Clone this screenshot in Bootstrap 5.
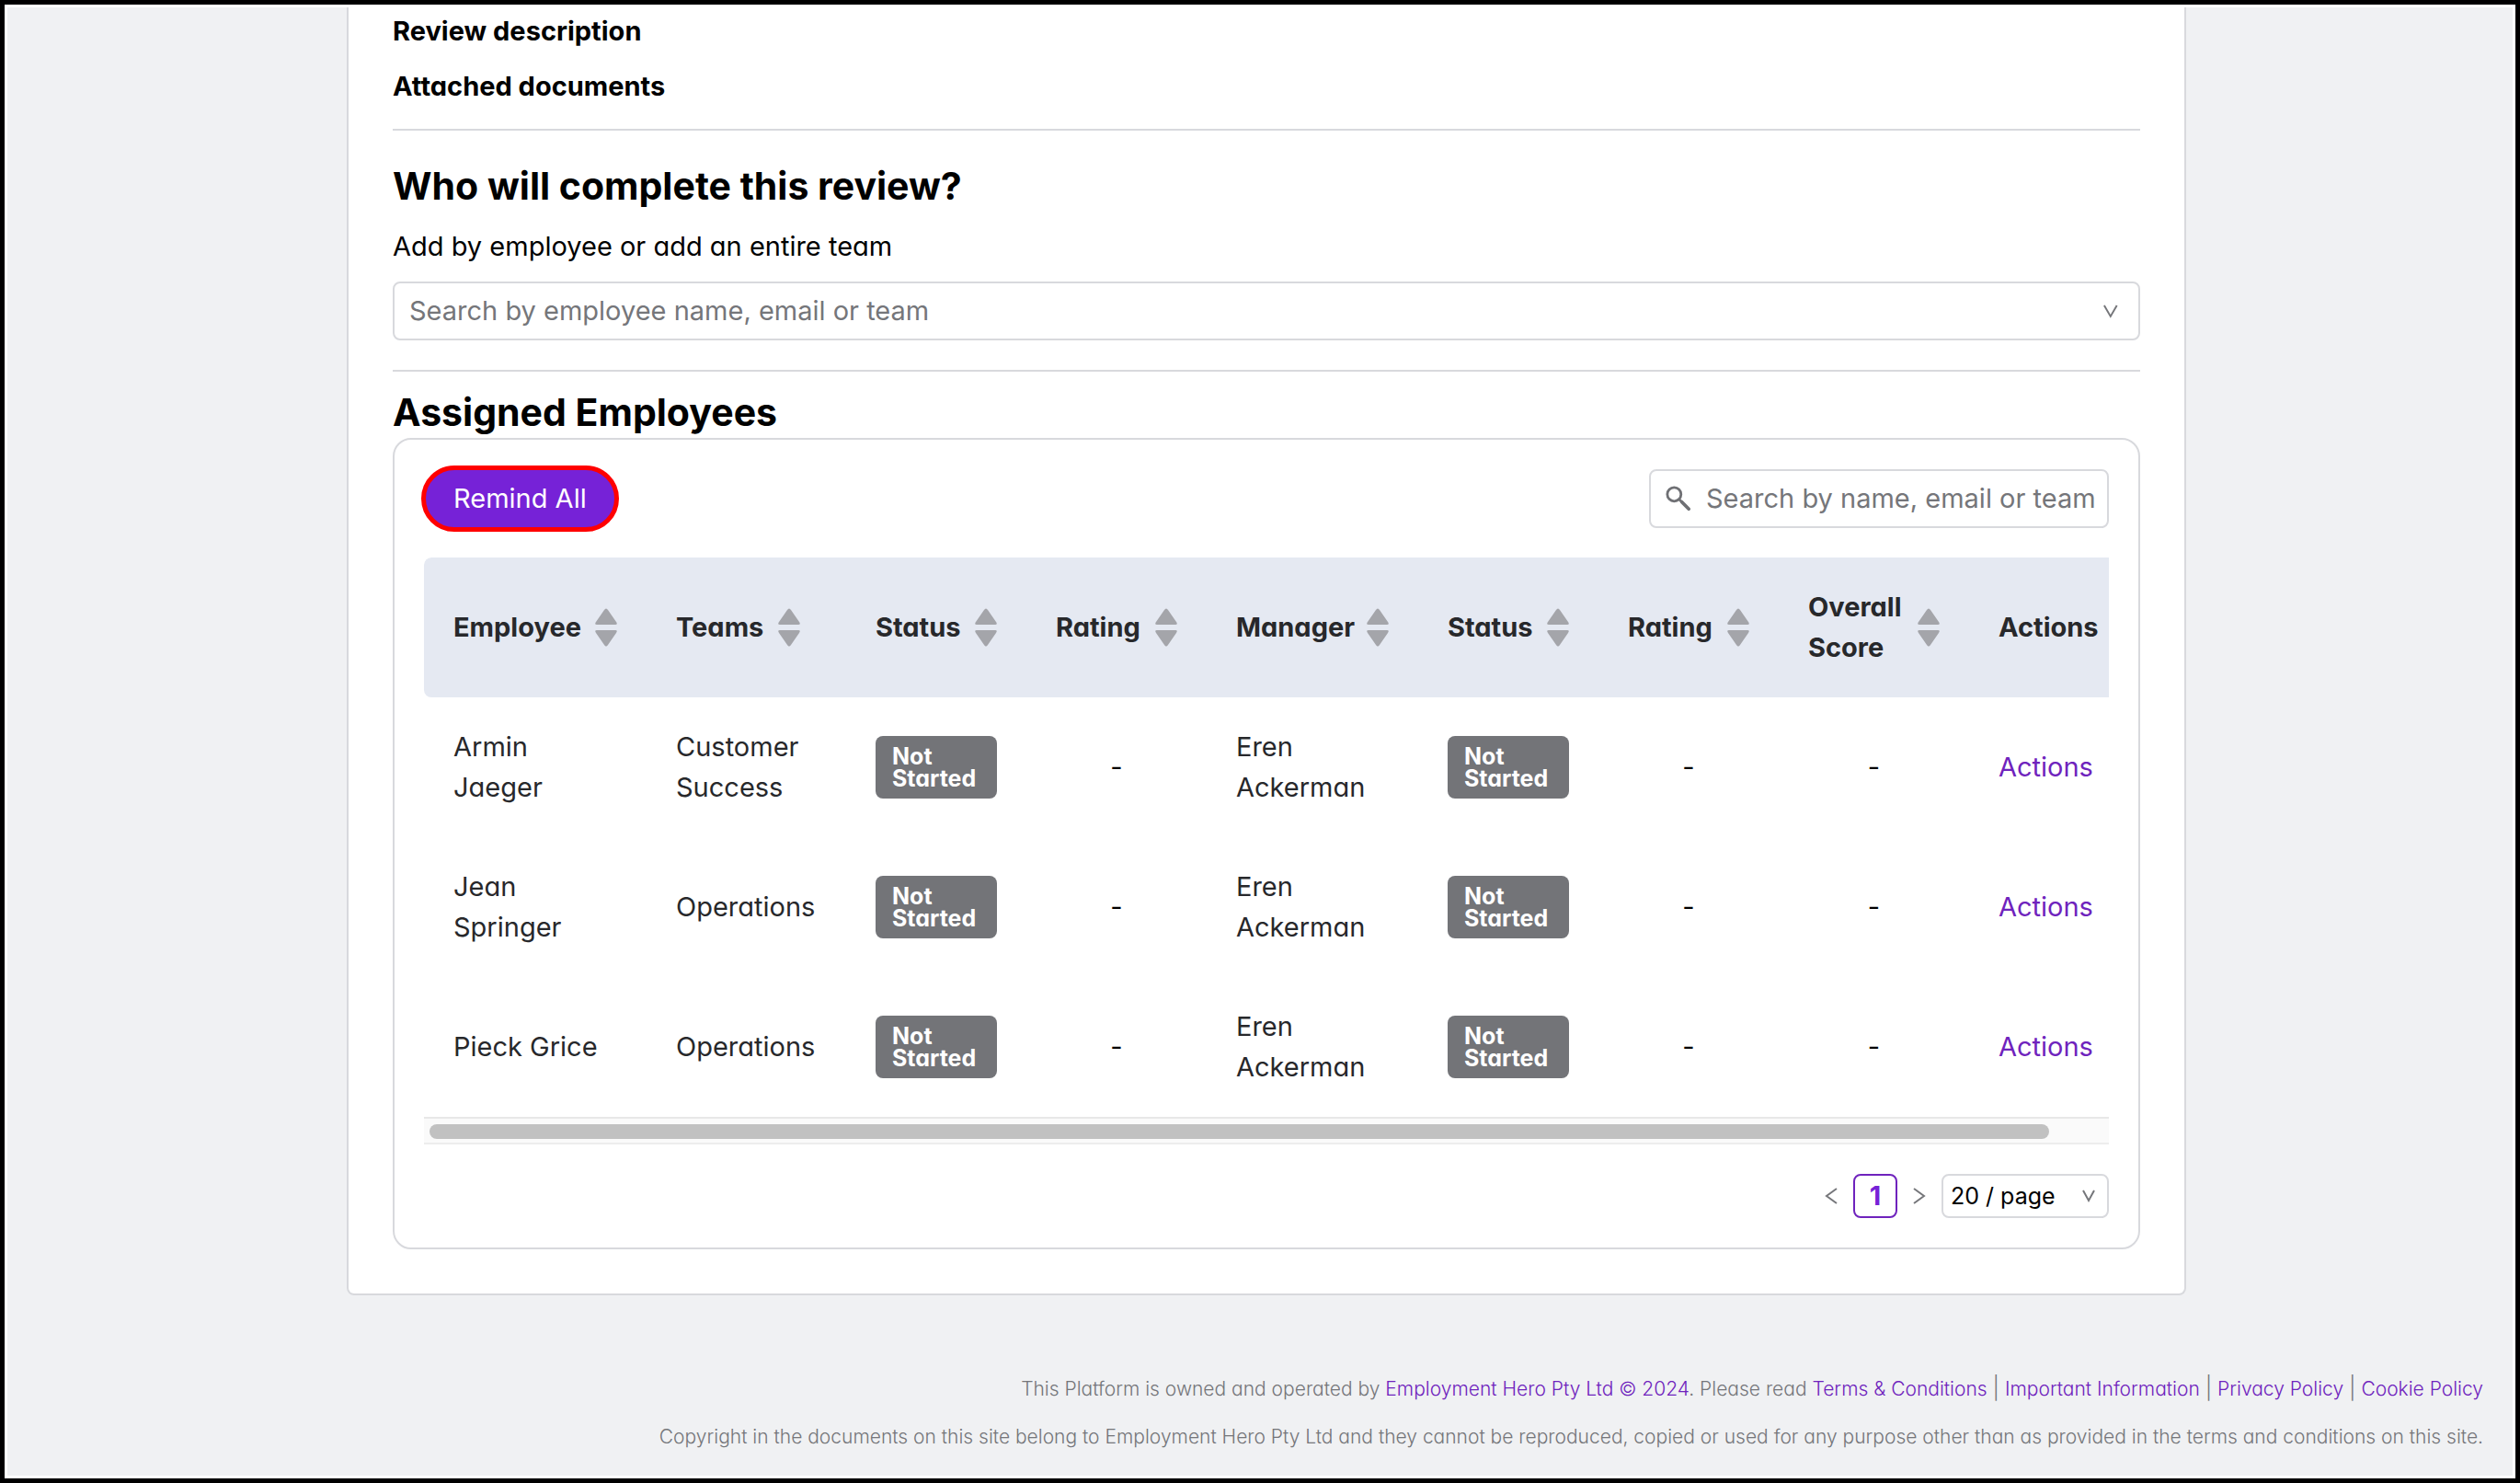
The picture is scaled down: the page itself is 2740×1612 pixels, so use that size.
<!DOCTYPE html>
<html lang="en">
<head>
<meta charset="utf-8">
<meta name="viewport" content="width=device-width, initial-scale=1">
<title>Performance review</title>
<link href="https://cdn.jsdelivr.net/npm/bootstrap@5.3.0/dist/css/bootstrap.min.css" rel="stylesheet">
<style>
  :root { --line: #d8d9dd; --brand: #6f23bd; --muted: #75767a; --ink: #27282b; }
  body { font-family: Inter, "Noto Sans", sans-serif; font-feature-settings: "cv11"; font-size: 29px; line-height: 44px; color: #000; background: #fff; }
  .page-frame { min-height: 100vh; border: 5px solid #000; padding: 3px; }
  .page-bg { background: #f0f1f3; }
  .page-main { padding-left: 14px; }
  .review-card { width: 100%; max-width: 2000px; background: #fff; border: 2px solid var(--line); border-top: 0; border-radius: 0 0 8px 8px; padding: 4px 48px 48px; }
  .field-title { font-size: 29px; line-height: 44px; font-weight: 700; margin: 0 0 16px; }
  .rule { height: 2px; background: var(--line); border: 0; opacity: 1; margin: 0; }
  .list-rule { margin: 32px 0 16px; }
  .section-title { font-size: 41px; line-height: 56px; font-weight: 700; margin: 0; }
  .field-box { height: 64px; border: 2px solid var(--line); border-radius: 8px; background: #fff; padding: 0 16px; }
  .field-box input { border: 0; padding: 0; font-size: 29px; line-height: 44px; background: transparent; min-width: 0; box-shadow: none; }
  .field-box input::placeholder { color: var(--muted); opacity: 1; }
  .search-box { width: 500px; padding-right: 8px; }
  .list-panel { border: 2px solid var(--line); border-radius: 20px; padding: 32px; }
  .btn-remind { --bs-btn-color: #fff; --bs-btn-bg: #7622d7; --bs-btn-hover-color: #fff; --bs-btn-hover-bg: #6a1cc4; font-size: 29px; line-height: 44px; padding: 9px 30px; border: 5px solid #f00; border-radius: 36px; margin: -5px 0 -4px -3px; }
  .table-clip { overflow: hidden; border-radius: 8px 0 0 0; }
  .people-table { table-layout: fixed; width: 1892px; margin: 0; --bs-table-bg: transparent; }
  .people-table > :not(caption) > * > * { padding: 32px; border: 0; height: 152px; vertical-align: middle; color: var(--ink); }
  .people-table > thead > tr > th { background: #e5e9f2; font-weight: 700; }
  .people-table > thead > tr > th:first-child { border-radius: 8px 0 0 8px; }
  .people-table > tbody > tr > td.num-cell { text-align: center; color: #000; }
  .sort-icon { width: 24px; height: 42px; flex: none; fill: #a4a5aa; }
  .col-name { width: 242px; } .col-team { width: 217px; } .col-short { width: 196px; } .col-manager { width: 230px; } .col-score { width: 207px; } .col-actions { width: 212px; }
  .status-tag { display: block; width: 132px; background: #737478; color: #fff; font-size: 25px; line-height: 24px; font-weight: 700; text-align: left; white-space: normal; padding: 10px 16px 10px 18px; border-radius: 8px; }
  .brand-link { color: var(--brand); text-decoration: none; }
  .scroll-track { height: 30px; background: #fafafa; border-top: 2px solid #e8e8e8; border-bottom: 2px solid #ededed; padding: 6px; }
  .scroll-thumb { width: calc(97% - 4px); height: 16px; border-radius: 8px; background: #c1c1c1; }
  .pager { gap: 16px; margin-top: 32px; }
  .pager-arrow { border: 0; background: none; padding: 0; width: 16px; display: flex; justify-content: center; }
  .pager-current { width: 48px; height: 48px; padding: 0; border: 2px solid var(--brand); border-radius: 8px; background: #fff; color: #7622d7; font-size: 29px; line-height: 44px; font-weight: 700; }
  .pager-size { width: 182px; height: 48px; border: 2px solid var(--line); border-radius: 8px; font-size: 25px; line-height: 44px; padding: 0 40px 0 8px; color: #000; background-color: #fff; background-position: right 12px center; background-size: 16px 16px; --bs-form-select-bg-img: url("data:image/svg+xml,%3Csvg xmlns='http://www.w3.org/2000/svg' viewBox='0 0 16 16' fill='none' stroke='%2375767a' stroke-width='2'%3E%3Cpath d='M2 2l6 11 6-11'/%3E%3C/svg%3E"); background-image: var(--bs-form-select-bg-img); }
  .page-foot { font-size: 21px; font-weight: 300; line-height: 36px; color: var(--muted); padding: 83px 32px 24px; }
  .page-foot p { margin: 0 0 16px; }
  .foot-sep { font-size: 24px; }
</style>
</head>
<body>
<div class="page-frame d-flex">
 <div class="page-bg d-flex flex-column flex-grow-1">
  <main class="page-main d-flex justify-content-center">
    <section class="review-card">
      <h3 class="field-title">Review description</h3>
      <h3 class="field-title">Attached documents</h3>
      <hr class="rule mt-4">
      <h2 class="section-title pt-2 mt-4">Who will complete this review?</h2>
      <label for="addPeople" class="d-block mt-3 mb-3">Add by employee or add an entire team</label>
      <div class="field-box d-flex align-items-center">
        <input id="addPeople" class="form-control flex-grow-1" type="text" role="combobox" aria-expanded="false" placeholder="Search by employee name, email or team">
        <svg width="28" height="20" viewBox="0 0 28 20" fill="none" stroke="#75767a" stroke-width="2" aria-hidden="true"><path d="M7 4l7 12 7-12"/></svg>
      </div>
      <hr class="rule list-rule">
      <h2 class="section-title">Assigned Employees</h2>
      <div class="list-panel">
        <div class="d-flex justify-content-between align-items-center mb-4 pb-2">
          <button type="button" class="btn btn-remind">Remind All</button>
          <div class="field-box search-box d-flex align-items-center">
            <svg class="flex-shrink-0" width="28" height="28" viewBox="0 0 30 30" fill="none" stroke="#6f7074" aria-hidden="true"><circle cx="10" cy="10" r="8" stroke-width="3"/><path d="M16 16l3 3" stroke-width="3"/><path d="M19 19l8 8" stroke-width="4" stroke-linecap="round"/></svg>
            <input id="findPeople" class="form-control flex-grow-1 ms-3" type="text" aria-label="Search by name, email or team" placeholder="Search by name, email or team">
          </div>
        </div>
        <div class="table-clip">
          <table class="table people-table">
            <colgroup><col class="col-name"><col class="col-team"><col class="col-short"><col class="col-short"><col class="col-manager"><col class="col-short"><col class="col-short"><col class="col-score"><col class="col-actions"></colgroup>
            <thead>
              <tr>
                <th scope="col"><div class="d-flex align-items-center justify-content-between">Employee <svg class="sort-icon"><use href="#sort"/></svg></div></th>
                <th scope="col"><div class="d-flex align-items-center gap-3">Teams <svg class="sort-icon"><use href="#sort"/></svg></div></th>
                <th scope="col"><div class="d-flex align-items-center justify-content-between">Status <svg class="sort-icon"><use href="#sort"/></svg></div></th>
                <th scope="col"><div class="d-flex align-items-center justify-content-between">Rating <svg class="sort-icon"><use href="#sort"/></svg></div></th>
                <th scope="col"><div class="d-flex align-items-center justify-content-between">Manager <svg class="sort-icon"><use href="#sort"/></svg></div></th>
                <th scope="col"><div class="d-flex align-items-center justify-content-between">Status <svg class="sort-icon"><use href="#sort"/></svg></div></th>
                <th scope="col"><div class="d-flex align-items-center justify-content-between">Rating <svg class="sort-icon"><use href="#sort"/></svg></div></th>
                <th scope="col"><div class="d-flex align-items-center justify-content-between">Overall Score <svg class="sort-icon"><use href="#sort"/></svg></div></th>
                <th scope="col">Actions</th>
              </tr>
            </thead>
            <tbody>
              <tr><td>Armin Jaeger</td><td>Customer Success</td><td><span class="status-tag">Not Started</span></td><td class="num-cell">-</td><td>Eren Ackerman</td><td><span class="status-tag">Not Started</span></td><td class="num-cell">-</td><td class="num-cell">-</td><td><a class="brand-link" href="#">Actions</a></td></tr>
              <tr><td>Jean Springer</td><td>Operations</td><td><span class="status-tag">Not Started</span></td><td class="num-cell">-</td><td>Eren Ackerman</td><td><span class="status-tag">Not Started</span></td><td class="num-cell">-</td><td class="num-cell">-</td><td><a class="brand-link" href="#">Actions</a></td></tr>
              <tr><td>Pieck Grice</td><td>Operations</td><td><span class="status-tag">Not Started</span></td><td class="num-cell">-</td><td>Eren Ackerman</td><td><span class="status-tag">Not Started</span></td><td class="num-cell">-</td><td class="num-cell">-</td><td><a class="brand-link" href="#">Actions</a></td></tr>
            </tbody>
          </table>
        </div>
        <div class="scroll-track"><div class="scroll-thumb"></div></div>
        <nav class="pager d-flex align-items-center justify-content-end" aria-label="Employee pages">
          <button type="button" class="pager-arrow" aria-label="Previous page"><svg width="14" height="18" viewBox="0 0 14 18" fill="none" stroke="#75767a" stroke-width="2"><path d="M13 1L2 9l11 8"/></svg></button>
          <button type="button" class="pager-current" aria-current="page">1</button>
          <button type="button" class="pager-arrow" aria-label="Next page"><svg width="14" height="18" viewBox="0 0 14 18" fill="none" stroke="#75767a" stroke-width="2"><path d="M1 1l11 8-11 8"/></svg></button>
          <select class="form-select pager-size" aria-label="Rows per page"><option>20 / page</option><option>50 / page</option></select>
        </nav>
      </div>
    </section>
  </main>
  <footer class="page-foot text-end">
    <p>This Platform is owned and operated by <a class="brand-link" href="#">Employment Hero Pty Ltd © 2024</a>. Please read <a class="brand-link" href="#">Terms &amp; Conditions</a> <span class="foot-sep">|</span> <a class="brand-link" href="#">Important Information</a> <span class="foot-sep">|</span> <a class="brand-link" href="#">Privacy Policy</a> <span class="foot-sep">|</span> <a class="brand-link" href="#">Cookie Policy</a></p>
    <p class="mb-0">Copyright in the documents on this site belong to Employment Hero Pty Ltd and they cannot be reproduced, copied or used for any purpose other than as provided in the terms and conditions on this site.</p>
  </footer>
 </div>
</div>
<svg class="d-none" aria-hidden="true"><symbol id="sort" viewBox="0 0 24 42"><path d="M10 2q2-3 4 0l9 13q2 3-1 3H2q-3 0-1-3z"/><path d="M10 40q2 3 4 0l9-13q2-3-1-3H2q-3 0-1 3z"/></symbol></svg>
<script src="https://cdn.jsdelivr.net/npm/bootstrap@5.3.0/dist/js/bootstrap.bundle.min.js"></script>
</body>
</html>
